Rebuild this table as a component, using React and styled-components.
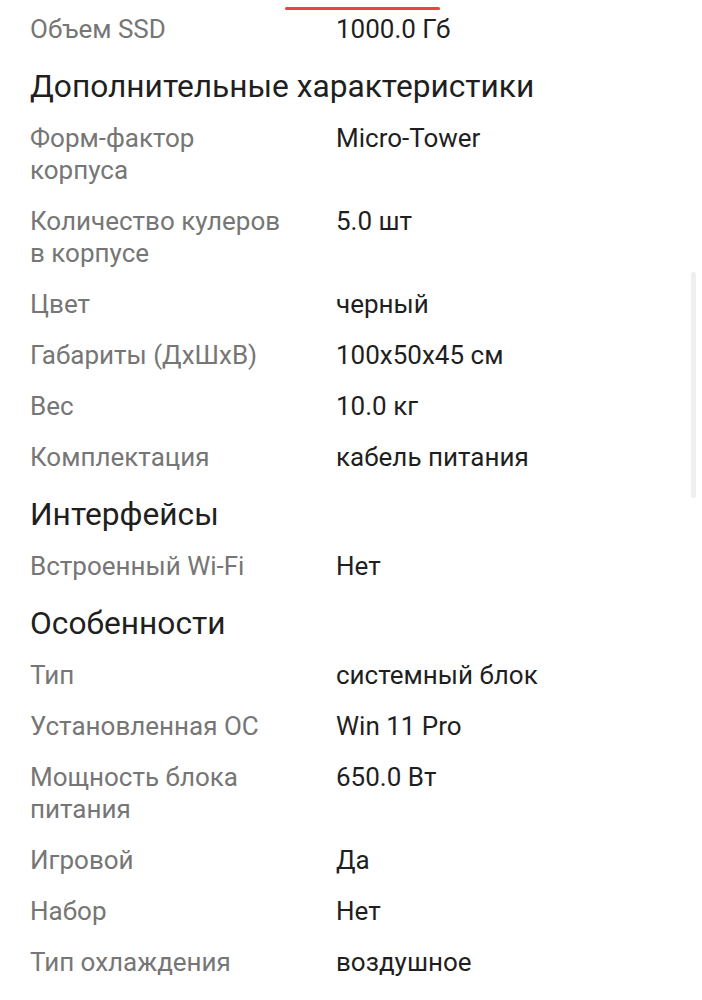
import React from 'react';
import styled, { createGlobalStyle } from 'styled-components';

const GlobalStyle = createGlobalStyle`
	body {
		margin: 0;
		background: #ffffff;
		font-family: Roboto, 'Noto Sans', sans-serif;
	}
`;

const sections = [
	{
		rows: [['Объем SSD', '1000.0 Гб']],
	},
	{
		title: 'Дополнительные характеристики',
		rows: [
			['Форм-фактор корпуса', 'Micro-Tower'],
			['Количество кулеров в корпусе', '5.0 шт'],
			['Цвет', 'черный'],
			['Габариты (ДхШхВ)', '100x50x45 см'],
			['Вес', '10.0 кг'],
			['Комплектация', 'кабель питания'],
		],
	},
	{
		title: 'Интерфейсы',
		rows: [['Встроенный Wi-Fi', 'Нет']],
	},
	{
		title: 'Особенности',
		rows: [
			['Тип', 'системный блок'],
			['Установленная ОС', 'Win 11 Pro'],
			['Мощность блока питания', '650.0 Вт'],
			['Игровой', 'Да'],
			['Набор', 'Нет'],
			['Тип охлаждения', 'воздушное'],
		],
	},
];

const App = () => {
	return (
		<>
			<GlobalStyle />
			<Page>
				<TabIndicator />
				<Scrollbar />
				{sections.map((section, i) => (
					<Section key={i}>
						{section.title && <Title>{section.title}</Title>}
						{section.rows.map(([label, value]) => (
							<Row key={label}>
								<Label>{label}</Label>
								<Value>{value}</Value>
							</Row>
						))}
					</Section>
				))}
			</Page>
		</>
	);
};

const Page = styled.div`
	position: relative;
	width: 702px;
	height: 1000px;
	overflow: hidden;
	padding: 4px 30px 0 30px;
	box-sizing: border-box;
`;

const TabIndicator = styled.div`
	position: absolute;
	top: 7px;
	left: 285px;
	width: 155px;
	height: 3px;
	border-radius: 2px;
	background: #e8453c;
`;

const Scrollbar = styled.div`
	position: absolute;
	top: 272px;
	right: 6px;
	width: 5px;
	height: 226px;
	border-radius: 3px;
	background: #efefef;
`;

const Section = styled.section`
	display: flex;
	flex-direction: column;
`;

const Title = styled.h2`
	margin: 12px 0 6px;
	font-size: 31.7px;
	line-height: 40px;
	font-weight: 400;
	color: #1f1f1f;
`;

const Row = styled.div`
	display: grid;
	grid-template-columns: 306px 1fr;
	padding: 9px 0 10px;
	font-size: 26px;
	line-height: 32px;
`;

const Label = styled.div`
	color: #767676;
	padding-right: 44px;
`;

const Value = styled.div`
	color: #1f1f1f;
`;

export default App;
